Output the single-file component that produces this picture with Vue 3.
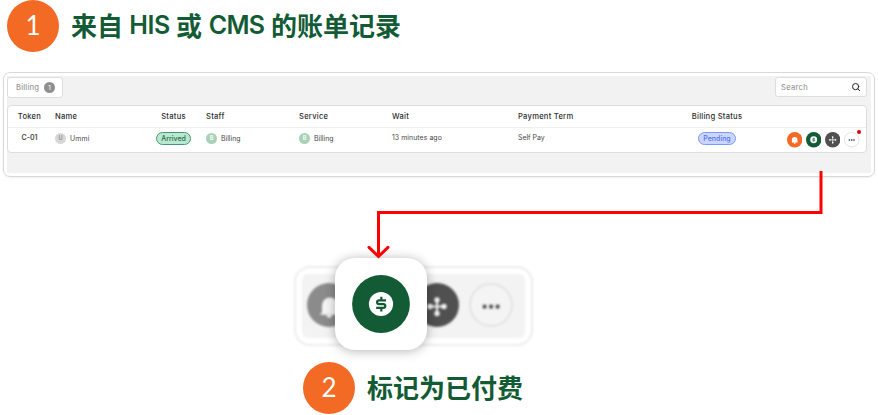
<script setup>
const headers = ['Token', 'Name', 'Status', 'Staff', 'Service', 'Wait', 'Payment Term', 'Billing Status', '']
const keys = ['token', 'name', 'status', 'staff', 'service', 'wait', 'term', 'bstatus', 'acts']
</script>

<template>
  <main class="page">
    <div class="step first">
      <span class="num">1</span>
      <h1 class="title"><span>来自</span><span class="latin his">HIS</span><span>或</span><span class="latin cms">CMS</span><span>的账单记录</span></h1>
    </div>

    <section class="panel">
      <div class="inner">
        <div class="toolbar">
          <div class="tab"><span class="tab-label">Billing</span><span class="count">1</span></div>
          <div class="search">
            <span class="ph">Search</span>
            <svg width="10" height="10" viewBox="0 0 10 10" fill="none" stroke="#222" stroke-width="1" stroke-linecap="round"><circle cx="4.600" cy="4.600" r="3.100" /><path d="M7 7L8.700 8.700" /></svg>
          </div>
        </div>
        <div class="table">
          <div class="row head">
            <div v-for="(h, i) in headers" :key="i" :class="['cell', keys[i]]"><span>{{ h }}</span></div>
          </div>
          <div class="row body">
            <div class="cell token"><span>C-01</span></div>
            <div class="cell name"><i class="avatar grey">U</i><span>Ummi</span></div>
            <div class="cell status"><span class="pill arrived">Arrived</span></div>
            <div class="cell staff"><i class="avatar">B</i><span>Billing</span></div>
            <div class="cell service"><i class="avatar">B</i><span>Billing</span></div>
            <div class="cell wait"><span>13 minutes ago</span></div>
            <div class="cell term"><span>Self Pay</span></div>
            <div class="cell bstatus"><span class="pill pending">Pending</span></div>
            <div class="cell acts">
              <svg class="act" viewBox="0 0 44 44"><circle cx="22" cy="22" r="22" fill="#f36a25" /><path d="M14 30V22a8 8 0 0 1 16 0v8zM19 31h6a3 3 0 0 1-6 0z" fill="#fff" /></svg>
              <svg class="act" viewBox="0 0 58 58"><circle cx="29" cy="29" r="29" fill="#125b35" /><circle cx="29" cy="29" r="13" fill="#fff" /><path d="M34 25.300H27a1.900 1.900 0 0 0 0 3.800h4.400a1.900 1.900 0 0 1 0 3.800H24.200M29.300 21.800v3.200M29.300 33v3.500" fill="none" stroke="#125b35" stroke-width="2.600" /></svg>
              <svg class="act" viewBox="0 0 44 44"><circle cx="22" cy="22" r="22" fill="#505050" /><path d="M22 14v17M13.500 22.500h17" stroke="#fff" stroke-width="2" /><g fill="#fff"><circle cx="22" cy="14.500" r="2.400" /><circle cx="22" cy="30.500" r="2.400" /><circle cx="14" cy="22.500" r="2.400" /><circle cx="30" cy="22.500" r="2.400" /></g></svg>
              <span class="more">
                <svg class="act" viewBox="0 0 44 44"><circle cx="22" cy="22" r="20.800" fill="#fff" stroke="#ddd" stroke-width="2.400" /><path d="M13.500 23h4M20 23h4M26.500 23h4" stroke="#444" stroke-width="4" /></svg>
                <b class="dot"></b>
              </span>
            </div>
          </div>
        </div>
      </div>
    </section>

    <div class="zoomed">
      <div class="bar">
        <div class="bar-inner">
          <svg class="big bell" viewBox="0 0 44 44"><circle cx="22" cy="22" r="22" fill="#8b8b8b" /><path d="M15 30V22.500a8 8 0 0 1 16 0V30H32.500v1.800H13.500V30zM19.500 32h5.500a2.700 2.700 0 0 1-5.500 0z" fill="#f5f5f5" /></svg>
          <svg class="big move" viewBox="0 0 44 44"><circle cx="22" cy="22" r="22" fill="#505050" /><path d="M22 16v15M14.500 23.500h15" stroke="#f2f2f2" stroke-width="2" /><g fill="#f2f2f2"><circle cx="22" cy="17" r="2.700" /><circle cx="22" cy="30.500" r="2.700" /><circle cx="15" cy="23.500" r="2.700" /><circle cx="29" cy="23.500" r="2.700" /></g></svg>
          <svg class="big dots" viewBox="0 0 44 44"><circle cx="22" cy="22" r="21" fill="#f4f4f4" stroke="#e2e2e2" stroke-width="1.800" /><path d="M13.800 23.700h3.600M20.300 23.700h3.600M26.800 23.700h3.600" stroke="#484848" stroke-width="3.800" /></svg>
        </div>
      </div>
      <div class="focus">
        <svg width="58" height="58" viewBox="0 0 58 58"><circle cx="29" cy="29" r="28.900" fill="#125b35" /><circle cx="29" cy="29" r="12.100" fill="#fff" /><path d="M34 25.300H27a1.900 1.900 0 0 0 0 3.800h4.400a1.900 1.900 0 0 1 0 3.800H24.200M29.300 21.800v3.200M29.300 33v3.500" fill="none" stroke="#125b35" stroke-width="2.200" /></svg>
      </div>
    </div>

    <div class="step second">
      <span class="num">2</span>
      <h2 class="title">标记为已付费</h2>
    </div>

    <svg class="connector" width="878" height="415" viewBox="0 0 878 415" fill="none" stroke="#fe0000" stroke-width="3"><path d="M821 171V212.500H378.500V257" /><path d="M369 247.300L378.500 256.500L388 247.300" stroke-linecap="round" /></svg>
  </main>
</template>

<style>
body { margin: 0; background: #fff; }
</style>

<style scoped>
.page { position: relative; width: 878px; height: 415px; overflow: hidden; font-family: "Inter", "Noto Sans CJK SC", sans-serif; color: #333; }
.step { display: flex; align-items: center; height: 52px; }
.first { padding-left: 7px; }
.second { padding-left: 303px; margin-top: 12px; }
.num { box-sizing: border-box; width: 52px; height: 52px; padding-bottom: 2px; border-radius: 50%; background: #f36a25; color: #fff; display: flex; align-items: center; justify-content: center; font: 26px "Lato", sans-serif; flex: none; }
.title { margin: 0 0 2px 12px; font: 700 26px/50px "Noto Sans CJK SC", sans-serif; color: #125b35; white-space: nowrap; display: flex; }
.latin { font-family: "Inter", sans-serif; font-weight: 600; font-size: 25px; text-align: center; }
.his { width: 53px; letter-spacing: -0.5px; }
.cms { width: 69px; letter-spacing: -0.7px; }
.panel { box-sizing: border-box; width: 872px; height: 105px; margin: 20px 0 0 3px; padding: 3px; border: 1px solid #d9d9d9; border-radius: 7px; box-shadow: 0 1px 2px #0001; }
.inner { box-sizing: border-box; height: 97px; background: #f2f2f2; padding: 1px 4px 0 0; }
.toolbar { display: flex; justify-content: space-between; height: 21px; }
.tab, .search { box-sizing: border-box; background: #fff; border: 1px solid #ddd; border-radius: 3px; display: flex; align-items: center; justify-content: space-between; }
.tab { width: 56px; height: 21px; padding: 0 7px 0 8px; font-size: 7.7px; font-weight: 500; color: #999; }
.tab-label { letter-spacing: 0.15px; }
.count { width: 11px; height: 11px; border-radius: 50%; background: #8f8f8f; color: #fff; font-size: 6px; line-height: 11px; text-align: center; }
.search { width: 92px; height: 20px; padding: 0 5px; font-size: 7.6px; letter-spacing: 0.3px; color: #888; }
.table { box-sizing: border-box; width: 860px; height: 48px; margin-top: 7px; background: #fff; border: 1px solid #ddd; border-radius: 4px; }
.row { display: grid; grid-template-columns: 43px 92px 61px 93px 93px 126px 154px 94px 102px; }
.head { height: 21px; border-bottom: 1px solid #eee; font-size: 7.6px; font-weight: 500; letter-spacing: 0.25px; color: #2d2d2d; }
.body { height: 24px; font-size: 6.9px; color: #484848; }
.cell { display: flex; align-items: center; white-space: nowrap; padding-left: 2px; box-sizing: border-box; }
.body .cell { height: 21px; gap: 4px; }
.body .wait, .body .term, .body .token { height: 19px; }
.body .wait { letter-spacing: 0.07px; }
.body .token { font-weight: 600; font-size: 7px; }
.token, .status, .bstatus { justify-content: center; padding-left: 0; }
.name { padding-left: 4px; }
.body .name { letter-spacing: 0.15px; }
.avatar { width: 11px; height: 11px; border-radius: 50%; background: #a9d0b8; color: #fff; font: 600 5.5px/11px "Inter", sans-serif; text-align: center; }
.grey { background: #d7d7d7; color: #888; }
.pill { box-sizing: border-box; height: 13px; border: 1px solid; border-radius: 7px; font-size: 7px; line-height: 11px; text-align: center; font-weight: 500; }
.arrived { width: 35px; background: #b9e8d0; border-color: #4f9272; color: #28694b; }
.pending { width: 38px; background: #cad6ff; border-color: #7b98fc; color: #5274ed; }
.body .acts { height: 24px; gap: 3.800px; padding-left: 22.700px; }
.act { width: 15.4px; height: 15.4px; display: block; }
.more { position: relative; }
.dot { position: absolute; width: 4px; height: 4px; border-radius: 50%; background: #e00000; right: -1.5px; top: -2px; }
.zoomed { position: relative; width: 239px; height: 92px; margin: 81px 0 0 294px; }
.bar { box-sizing: border-box; height: 80px; width: 239px; padding: 6px; border: 2px solid #ececec; border-radius: 16px; filter: blur(1px); transform: translateY(8px); }
.bar-inner { box-sizing: border-box; height: 64px; background: #f3f3f3; border-radius: 6px; display: flex; align-items: center; padding: 0 0 2px 5px; }
.big { width: 44px; height: 44px; flex: none; }
.move { margin-left: 64px; }
.dots { margin-left: 10px; }
.focus { position: absolute; left: 41px; top: 0; width: 92px; height: 92px; border-radius: 20px; background: #fff; box-shadow: 0 1px 11px #0000004d; display: flex; align-items: center; justify-content: center; }
.connector { position: absolute; inset: 0; pointer-events: none; }
</style>
